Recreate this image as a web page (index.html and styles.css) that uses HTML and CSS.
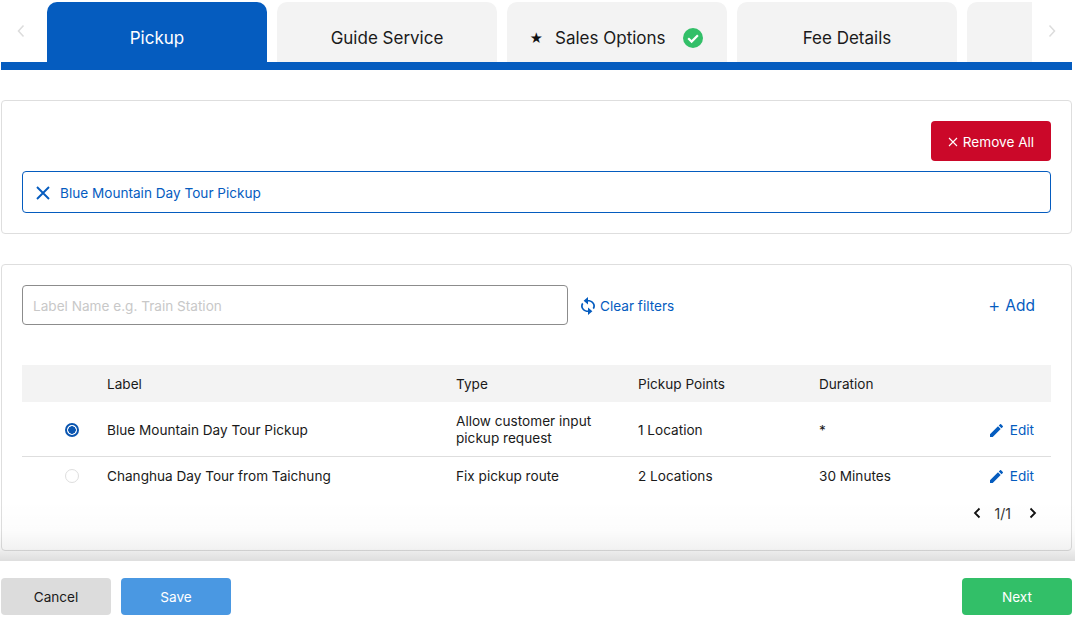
FILE: index.html
```html
<!DOCTYPE html>
<html lang="en">
<head>
<meta charset="utf-8">
<title>Pickup</title>
<link rel="stylesheet" href="styles.css">
</head>
<body>
<div class="page">
  <nav class="tabbar">
    <div class="tabs-row">
      <button class="arrow"><svg width="10" height="14" viewBox="0 0 10 14"><path d="M7.500 1.500 2.500 7 7.500 12.500" fill="none" stroke="#dcdcdc" stroke-width="1.500"/></svg></button>
      <div class="tabs">
        <div class="tab active">Pickup</div>
        <div class="tab">Guide Service</div>
        <div class="tab tab-sales"><span class="star">★</span>Sales Options<svg class="check" width="20" height="20" viewBox="0 0 20 20"><circle cx="10" cy="10" r="10" fill="#32bf68"/><path d="M5.200 10.300 8.600 13.600 14.900 7.200" fill="none" stroke="#fff" stroke-width="2.200"/></svg></div>
        <div class="tab">Fee Details</div>
        <div class="tab"></div>
      </div>
      <button class="arrow right"><svg width="10" height="14" viewBox="0 0 10 14"><path d="M2.500 1.500 7.500 7 2.500 12.500" fill="none" stroke="#dcdcdc" stroke-width="1.500"/></svg></button>
    </div>
    <div class="tab-line"></div>
  </nav>

  <section class="card selected-card">
    <div class="remove-row">
      <button class="btn-remove"><svg width="10" height="10" viewBox="0 0 10 10"><path d="M1 1 9 9M9 1 1 9" stroke="#fff" stroke-width="1.100"/></svg>Remove All</button>
    </div>
    <div class="chip">
      <svg width="16" height="16" viewBox="0 0 16 16"><path d="M2 2 14 14M14 2 2 14" stroke="#055cbf" stroke-width="1.900"/></svg>
      <span>Blue Mountain Day Tour Pickup</span>
    </div>
  </section>

  <section class="card list-card">
    <div class="filters">
      <input class="search" type="text" placeholder="Label Name e.g. Train Station">
      <a class="clear"><svg width="14" height="18" viewBox="4 0 16 24" preserveAspectRatio="none"><path fill="#055cbf" d="M12 4V0L7 5l5 5V6c3.310 0 6 2.690 6 6 0 1.010-.25 1.970-.7 2.800l1.460 1.460C19.540 15.030 20 13.570 20 12c0-4.420-3.580-8-8-8zm0 14c-3.310 0-6-2.690-6-6 0-1.010.25-1.970.7-2.800L5.240 7.740C4.460 8.970 4 10.430 4 12c0 4.420 3.580 8 8 8v4l5-5-5-5v4z"/></svg>Clear filters</a>
      <a class="add"><span class="plus">+</span>Add</a>
    </div>
    <table class="grid">
      <thead>
        <tr><th class="c-radio"></th><th class="c-label">Label</th><th class="c-type">Type</th><th class="c-points">Pickup Points</th><th class="c-dur">Duration</th><th></th></tr>
      </thead>
      <tbody>
        <tr class="first">
          <td class="radio-cell"><span class="radio on"></span></td>
          <td>Blue Mountain Day Tour Pickup</td>
          <td>Allow customer input<br>pickup request</td>
          <td>1 Location</td>
          <td>*</td>
          <td class="edit-cell"><a class="edit"><svg width="13" height="13" viewBox="3 3 18 18"><path fill="#055cbf" d="M3 17.250V21h3.750L17.810 9.940l-3.750-3.750L3 17.250zM20.710 7.040a1 1 0 0 0 0-1.410l-2.340-2.340a1 1 0 0 0-1.410 0l-1.830 1.830 3.750 3.750 1.830-1.830z"/></svg>Edit</a></td>
        </tr>
        <tr class="second">
          <td class="radio-cell"><span class="radio"></span></td>
          <td>Changhua Day Tour from Taichung</td>
          <td>Fix pickup route</td>
          <td>2 Locations</td>
          <td>30 Minutes</td>
          <td class="edit-cell"><a class="edit"><svg width="13" height="13" viewBox="3 3 18 18"><path fill="#055cbf" d="M3 17.250V21h3.750L17.810 9.940l-3.750-3.750L3 17.250zM20.710 7.040a1 1 0 0 0 0-1.410l-2.340-2.340a1 1 0 0 0-1.410 0l-1.830 1.830 3.750 3.750 1.830-1.830z"/></svg>Edit</a></td>
        </tr>
      </tbody>
    </table>
    <div class="pager">
      <svg width="8" height="12" viewBox="0 0 8 12"><path d="M6.500 1.500 2 6l4.500 4.500" fill="none" stroke="#111" stroke-width="1.800"/></svg>
      <span class="page-no">1/1</span>
      <svg width="8" height="12" viewBox="0 0 8 12"><path d="M1.500 1.500 6 6l-4.500 4.500" fill="none" stroke="#111" stroke-width="1.800"/></svg>
    </div>
  </section>

  <footer class="footer">
    <div class="footer-left">
      <button class="btn btn-cancel">Cancel</button>
      <button class="btn btn-save">Save</button>
    </div>
    <button class="btn btn-next">Next</button>
  </footer>
</div>
</body>
</html>
```
FILE: styles.css
```css
* { box-sizing: border-box; }
html, body { margin: 0; height: 617px; overflow: hidden; background: #fff; }
body { font-family: Inter, "Liberation Sans", sans-serif; font-size: 13.600px; color: #1a1a1a; }
button { font-family: inherit; border: 0; padding: 0; cursor: pointer; }

.page { width: 1071px; margin-left: 1px; padding-top: 2px; }

.tabs-row { display: flex; height: 60px; }
.arrow { width: 46px; background: none; display: flex; justify-content: center; padding: 22px 6px 0 0; }
.arrow.right { width: 40px; padding-right: 0; }
.tabs { display: flex; gap: 10px; width: 985px; overflow: hidden; }
.tab {
  flex: 0 0 220px; display: flex; align-items: center; justify-content: center;
  background: #f3f3f3; border-radius: 10px 10px 0 0; font-size: 17px; color: #1a1a1a;
  padding-top: 12px;
}
.tab-sales { padding-right: 2px; }
.tab.active { background: #055cbf; color: #fff; }
.star { font-size: 13px; margin-right: 12px; color: #111; }
.check { margin-left: 17px; }
.tab-line { height: 8px; background: #055cbf; }

.card { background: #fff; border: 1px solid #dedede; border-radius: 4px; padding: 0 20px; }
.selected-card { margin-top: 30px; height: 134px; padding-top: 20px; }
.remove-row { display: flex; justify-content: flex-end; }
.btn-remove {
  width: 120px; height: 40px; background: #cb0829; color: #fff; border-radius: 4px; font-size: 13.600px;
  display: flex; align-items: center; justify-content: center; gap: 5px; padding-top: 2px;
}
.chip {
  margin-top: 10px; height: 42px; border: 1px solid #055cbf; border-radius: 4px;
  display: flex; align-items: center; gap: 9px; padding: 2px 0 0 12px; color: #055cbf; font-size: 13.600px;
}

.list-card { margin-top: 30px; height: 287px; padding-top: 20px; }
.filters { display: flex; align-items: center; height: 40px; }
.search {
  width: 546px; height: 40px; border: 1px solid #8c8c8c; border-radius: 4px; padding: 2px 10px 0;
  font: 13.600px Inter, "Liberation Sans", sans-serif; outline: none;
}
.search::placeholder { color: #c8c8c8; opacity: 1; }
.clear { margin-left: 13px; display: flex; align-items: center; gap: 5px; color: #055cbf; font-size: 13.600px; padding-top: 2px; }
.add { margin-left: auto; margin-right: 16px; color: #055cbf; font-size: 15.500px; display: flex; align-items: center; gap: 5px; }
.plus { font-size: 19px; font-weight: 300; }

.grid { width: 1029px; margin-top: 40px; border-collapse: separate; border-spacing: 0; table-layout: fixed; }
.grid th { height: 37px; background: #f3f3f3; font-weight: 400; text-align: left; padding: 0; font-size: 13.600px; }
.grid td { padding: 0; line-height: 17px; }
.c-radio { width: 85px; }
.c-label { width: 349px; }
.c-type { width: 182px; }
.c-points { width: 181px; }
.c-dur { width: 130px; }
.grid .first td { height: 55px; border-bottom: 1px solid #dedede; padding-top: 2px; }
.second td { height: 38px; }
.grid .radio-cell { padding-left: 43px; }
.radio { display: block; width: 14px; height: 14px; border-radius: 50%; border: 1px solid #dedede; }
.radio.on { border: 2px solid #0a55b0; background: radial-gradient(circle, #0a55b0 0 3.500px, #fff 4px); }
.edit-cell { text-align: right; }
.edit { display: inline-flex; align-items: center; gap: 7px; color: #055cbf; margin-right: 17px; vertical-align: middle; }

.pager { display: flex; justify-content: flex-end; align-items: center; height: 36px; padding-right: 14px; color: #333; }
.page-no { margin: 0 18px 0 14px; font-size: 14px; }

.footer { position: relative; margin-top: 10px; padding-top: 17px; display: flex; justify-content: space-between; }
.footer::before {
  content: ""; position: absolute; left: -1px; right: -3px; bottom: 100%; height: 61px; pointer-events: none;
  background: linear-gradient(to bottom, rgba(0,0,0,0) 0, rgba(0,0,0,.012) 49%, rgba(0,0,0,.05) 80%, rgba(0,0,0,.08) 85%, rgba(0,0,0,.13) 100%);
}
.footer-left { display: flex; gap: 10px; }
.btn { width: 110px; height: 37px; border-radius: 4px; font-size: 13.600px; }
.btn-cancel { background: #dcdcdc; color: #1a1a1a; }
.btn-save { background: #4a98e2; color: #fff; }
.btn-next { background: #32bf68; color: #fff; }
```
